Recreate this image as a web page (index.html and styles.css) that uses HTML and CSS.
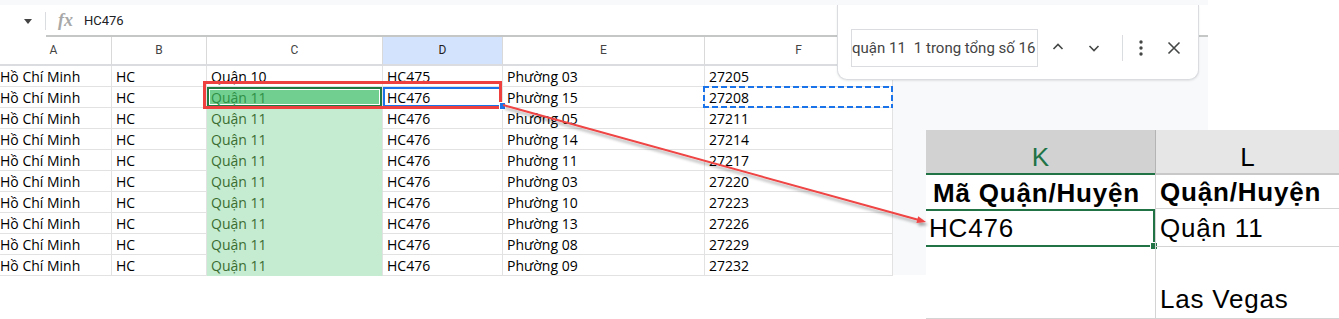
FILE: index.html
```html
<!DOCTYPE html>
<html lang="vi">
<head>
    <meta charset="UTF-8">
    <title>Tìm quận 11</title>
    <link rel="stylesheet" href="styles.css">
</head>
<body>
    <div class="sheets">
        <div class="topstrip"></div>
        <div class="formula">
            <div class="namebox"><span class="caret"></span><span class="sep"></span></div>
            <div class="fxbar"><span class="fx">fx</span><span class="fxval">HC476</span></div>
        </div>
        <div class="sheet-body">
            <div class="grid">
                <div class="hd">A</div>
                <div class="hd">B</div>
                <div class="hd">C</div>
                <div class="hd on">D</div>
                <div class="hd">E</div>
                <div class="hd">F</div>

                <div class="c">Hồ Chí Minh</div><div class="c">HC</div><div class="c">Quận 10</div><div class="c">HC475</div><div class="c">Phường 03</div><div class="c">27205</div>
                <div class="c">Hồ Chí Minh</div><div class="c">HC</div><div class="c hit cur">Quận 11</div><div class="c act">HC476</div><div class="c">Phường 15</div><div class="c copy">27208</div>
                <div class="c">Hồ Chí Minh</div><div class="c">HC</div><div class="c hit">Quận 11</div><div class="c">HC476</div><div class="c">Phường 05</div><div class="c">27211</div>
                <div class="c">Hồ Chí Minh</div><div class="c">HC</div><div class="c hit">Quận 11</div><div class="c">HC476</div><div class="c">Phường 14</div><div class="c">27214</div>
                <div class="c">Hồ Chí Minh</div><div class="c">HC</div><div class="c hit">Quận 11</div><div class="c">HC476</div><div class="c">Phường 11</div><div class="c">27217</div>
                <div class="c">Hồ Chí Minh</div><div class="c">HC</div><div class="c hit">Quận 11</div><div class="c">HC476</div><div class="c">Phường 03</div><div class="c">27220</div>
                <div class="c">Hồ Chí Minh</div><div class="c">HC</div><div class="c hit">Quận 11</div><div class="c">HC476</div><div class="c">Phường 10</div><div class="c">27223</div>
                <div class="c">Hồ Chí Minh</div><div class="c">HC</div><div class="c hit">Quận 11</div><div class="c">HC476</div><div class="c">Phường 13</div><div class="c">27226</div>
                <div class="c">Hồ Chí Minh</div><div class="c">HC</div><div class="c hit">Quận 11</div><div class="c">HC476</div><div class="c">Phường 08</div><div class="c">27229</div>
                <div class="c">Hồ Chí Minh</div><div class="c">HC</div><div class="c hit">Quận 11</div><div class="c">HC476</div><div class="c">Phường 09</div><div class="c">27232</div>
            </div>
            <div class="filler"></div>
        </div>
    </div>

    <div class="mark"></div>
    <div class="handle"></div>

    <div class="find">
        <div class="find-input"><span>quận 11</span><span class="count">1 trong tổng số 16</span></div>
        <svg class="ico up" width="20" height="20" viewBox="0 0 20 20"><polyline points="5.5,11 10,6.5 14.5,11" /></svg>
        <svg class="ico down" width="20" height="20" viewBox="0 0 20 20"><polyline points="5.5,8 10,12.5 14.5,8" /></svg>
        <span class="find-sep"></span>
        <svg class="ico dots" width="20" height="20" viewBox="0 0 20 20"><circle cx="10" cy="4" r="1.7" /><circle cx="10" cy="10" r="1.7" /><circle cx="10" cy="16" r="1.7" /></svg>
        <svg class="ico close" width="20" height="20" viewBox="0 0 20 20"><path d="M4.5 4.5L15.5 15.5M15.5 4.5L4.5 15.5" /></svg>
    </div>

    <div class="excel">
        <div class="xh k">K</div>
        <div class="xh l">L</div>
        <div class="xc r1 kc"><b>Mã Quận/Huyện</b></div>
        <div class="xc r1 lc"><b>Quận/Huyện</b></div>
        <div class="xc r2 kc sel">HC476<span class="xhandle"></span></div>
        <div class="xc r2 lc">Quận 11</div>
        <div class="xc r3 kc"></div>
        <div class="xc r3 lc">Las Vegas</div>
    </div>

    <svg class="arrow" width="1339" height="319" viewBox="0 0 1339 319">
        <defs>
            <filter id="shadow" x="-10%" y="-50%" width="120%" height="200%">
                <feDropShadow dx="2" dy="3" stdDeviation="1.5" flood-color="#000" flood-opacity="0.35" />
            </filter>
        </defs>
        <g filter="url(#shadow)">
            <line x1="503" y1="105" x2="918" y2="219.8" stroke="#ef4444" stroke-width="2" />
            <polygon points="926,222 918.2,216.2 916.4,223" fill="#ef4444" />
        </g>
    </svg>
</body>
</html>
```

FILE: styles.css
```css
body {
    margin: 0;
    width: 1339px;
    height: 319px;
    position: relative;
    overflow: hidden;
    background: #fff;
    font-family: "Open Sans", sans-serif;
}
.sheets {
    width: 1208px;
}
.topstrip {
    height: 5px;
    background: #f8f9fa;
}
.formula {
    display: flex;
    height: 32px;
    background: #fff;
}
.namebox {
    width: 46px;
    display: flex;
    align-items: center;
    padding-left: 24px;
    box-sizing: border-box;
}
.caret {
    border-left: 4px solid transparent;
    border-right: 4px solid transparent;
    border-top: 5px solid #444;
    margin-top: 1px;
}
.namebox .sep {
    width: 1px;
    height: 18px;
    background: #dadce0;
    margin-left: 13px;
}
.fxbar {
    flex: 1;
    display: flex;
    align-items: center;
    box-sizing: border-box;
    border-bottom: 2px solid #c4c7c5;
}
.fx {
    font: italic bold 18px "Liberation Serif", serif;
    color: #a8a8a8;
    margin-left: 12px;
}
.fxval {
    font: 13px Roboto, sans-serif;
    color: #202124;
    margin-left: 11px;
}
.sheet-body {
    display: flex;
    height: 238px;
}
.grid {
    flex: none;
    display: grid;
    grid-template-columns: 116px 95px 176px 120px 202px 188px;
    grid-auto-rows: 21px;
    grid-template-rows: 29px;
    margin-left: -4px;
    background: #fff;
}
.filler {
    flex: 1;
    background: #f8f9fa;
}
.hd {
    box-sizing: border-box;
    border-right: 1px solid #d9d9d9;
    border-bottom: 2px solid #dadce0;
    text-align: center;
    font: 12px Roboto, sans-serif;
    line-height: 27px;
    color: #444;
}
.hd.on {
    background: #d3e3fd;
    color: #1f1f1f;
}
.c {
    position: relative;
    box-sizing: border-box;
    border-right: 1px solid #e2e2e2;
    border-bottom: 1px solid #e2e2e2;
    padding: 2px 4px 0;
    font-size: 14px;
    line-height: 18px;
    color: #000;
    white-space: nowrap;
    overflow: hidden;
}
.c.hit {
    background: #c5ecd1;
    border-bottom-color: #c5ecd1;
    color: #3b6d30;
}
.c.cur {
    background: #71d08f;
    color: #2f8f46;
    box-shadow: inset 0 0 0 2px #1f7a41, inset 0 0 0 3px #fff;
    overflow: visible;
}
.c.act {
    box-shadow: inset 0 0 0 2px #1a73e8;
}
.c.copy {
    overflow: visible;
}
.c.copy::after {
    content: "";
    position: absolute;
    left: -2px;
    right: -1px;
    top: -1px;
    bottom: -1px;
    background:
        linear-gradient(90deg, #1a73e8 6px, transparent 0) top left / 9px 2px repeat-x,
        linear-gradient(90deg, #1a73e8 6px, transparent 0) bottom left / 9px 2px repeat-x,
        linear-gradient(#1a73e8 6px, transparent 0) top left / 2px 9px repeat-y,
        linear-gradient(#1a73e8 6px, transparent 0) top right / 2px 9px repeat-y;
}
.mark {
    position: absolute;
    left: 203px;
    top: 81px;
    width: 299px;
    height: 28px;
    box-sizing: border-box;
    border: 3px solid #ef4040;
    z-index: 2;
}
.handle {
    position: absolute;
    left: 499px;
    top: 102px;
    width: 5px;
    height: 6px;
    background: #1a73e8;
    border: 1px solid #fff;
    z-index: 3;
}
.find {
    position: absolute;
    left: 837px;
    top: 5px;
    width: 362px;
    height: 75px;
    box-sizing: border-box;
    border: 1px solid #dadce0;
    border-top: none;
    border-radius: 0 0 10px 10px;
    background: #fff;
    box-shadow: 0 1px 2px rgba(60, 64, 67, 0.12);
    display: flex;
    align-items: center;
    align-content: flex-start;
    padding: 24px 0 0 13px;
    flex-wrap: wrap;
}
.find-input {
    width: 187px;
    height: 38px;
    box-sizing: border-box;
    border: 1px solid #dadce0;
    display: flex;
    align-items: center;
    font: 15px Roboto, sans-serif;
    color: #444;
    white-space: nowrap;
    overflow: hidden;
}
.find-input .count {
    margin-left: 8px;
}
.ico {
    fill: none;
    stroke: #444746;
    stroke-width: 1.6;
}
.ico.dots {
    fill: #444746;
    stroke: none;
}
.ico.up {
    margin-left: 10px;
}
.ico.down {
    margin-left: 16px;
}
.find-sep {
    width: 1px;
    height: 26px;
    background: #dadce0;
    margin-left: 18px;
}
.ico.dots {
    margin-left: 8px;
}
.ico.close {
    margin-left: 13px;
}
.excel {
    position: absolute;
    left: 926px;
    top: 130px;
    width: 413px;
    height: 189px;
    display: grid;
    grid-template-columns: 229px 184px;
    grid-template-rows: 45px 34px 38px 72px;
    background: #fff;
    font-family: "Liberation Sans", Arial, sans-serif;
    color: #000;
}
.xh {
    display: flex;
    align-items: flex-end;
    justify-content: center;
    box-sizing: border-box;
    font-size: 26px;
    line-height: 26px;
    padding-bottom: 3px;
}
.xh.k {
    background: #d2d2d2;
    color: #217346;
    border-bottom: 2px solid #217346;
}
.xh.l {
    background: #e6e6e6;
    border-left: 1px solid #b4b4b4;
    border-bottom: 2px solid #c8c8c8;
}
.xc {
    position: relative;
    display: flex;
    align-items: flex-end;
    box-sizing: border-box;
    font-size: 26px;
    line-height: 26px;
    letter-spacing: 0.8px;
    white-space: nowrap;
}
.xc.lc {
    border-left: 1px solid #d4d4d4;
    border-bottom: 1px solid #d4d4d4;
    padding-left: 4px;
}
.xc.r1 {
    padding-bottom: 3px;
}
.xc.r1.kc {
    padding-left: 7px;
}
.xc.r2 {
    padding-bottom: 5px;
}
.xc.sel {
    border: 2px solid #217346;
    border-left: none;
    padding-left: 3px;
    padding-bottom: 4px;
}
.xhandle {
    position: absolute;
    right: -5px;
    bottom: -5px;
    width: 6px;
    height: 6px;
    background: #217346;
    border: 1px solid #fff;
}
.xc.r3 {
    padding-bottom: 6px;
}
.xc.r3.kc {
    border-bottom: 1px solid #d4d4d4;
}
.arrow {
    position: absolute;
    left: 0;
    top: 0;
    pointer-events: none;
    z-index: 4;
}
```
